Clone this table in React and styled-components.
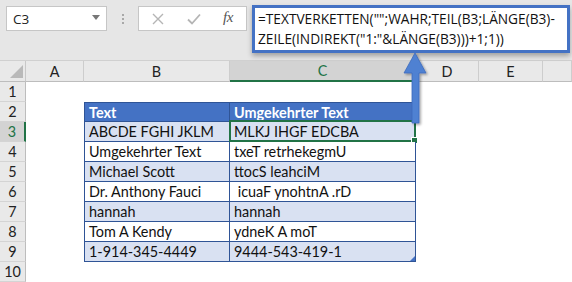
import React from 'react';
import styled, { createGlobalStyle, css } from 'styled-components';

const GlobalStyle = createGlobalStyle`
  html, body { margin: 0; padding: 0; background: #fff; }
  body { width: 572px; height: 282px; overflow: hidden; }
`;

const Window = styled.div`
  position: relative;
  width: 572px;
  height: 282px;
  overflow: hidden;
  background: #fff;
  font-family: "Lato", "Liberation Sans", sans-serif;
`;

/* ---------- formula bar ---------- */

const Toolbar = styled.div`
  box-sizing: border-box;
  height: 61px;
  display: flex;
  align-items: flex-start;
  padding: 6px 0 0 6px;
  background: #e6e6e6;
  border-bottom: 1px solid #d0d0d0;
`;

const NameBox = styled.div`
  box-sizing: border-box;
  width: 101px;
  height: 25px;
  display: flex;
  align-items: center;
  justify-content: space-between;
  padding: 0 6px 0 6px;
  background: #fff;
  border: 1px solid #c6c6c6;
  font-family: "Open Sans", "Noto Sans", sans-serif;
  font-size: 13.5px;
  color: #222;
`;

const Caret = styled.span`
  width: 0;
  height: 0;
  border-left: 4px solid transparent;
  border-right: 4px solid transparent;
  border-top: 5px solid #777;
  margin-top: -3px;
`;

const Grip = styled.div`
  margin: 8px 14px 0 15px;
  display: flex;
  flex-direction: column;
  gap: 2px;
  span {
    width: 2px;
    height: 2px;
    background: #a8a8a8;
  }
`;

const ButtonBox = styled.div`
  box-sizing: border-box;
  width: 109px;
  height: 25px;
  display: flex;
  align-items: center;
  padding: 0 0 0 13px;
  background: #fff;
  border: 1px solid #c6c6c6;
`;

const IconSlot = styled.span`
  display: flex;
  align-items: center;
  justify-content: center;
  width: ${(p) => p.$w}px;
  margin-left: ${(p) => p.$gap || 0}px;
`;

const Fx = styled.span`
  font-family: "Liberation Serif", "DejaVu Serif", serif;
  font-style: italic;
  font-size: 15px;
  color: #555;
  letter-spacing: -0.5px;
  margin-left: 22px;
  margin-top: -2px;
`;

const FormulaBox = styled.div`
  box-sizing: border-box;
  width: 318px;
  height: 48px;
  margin: -1px 0 0 5px;
  padding: 1px 0 0 3px;
  background: #fff;
  border: 3px solid #4472c4;
  box-shadow: 0 3px 5px rgba(0, 0, 0, 0.3);
  font-family: "Open Sans", "Noto Sans", sans-serif;
  font-size: 13.7px;
  line-height: 20px;
  color: #111;
  white-space: pre;
  position: relative;
  z-index: 2;
`;

/* ---------- sheet grid ---------- */

const Sheet = styled.div`
  display: grid;
  grid-template-columns: 26px 58px 146px 186px 63px 64px 1fr;
  grid-template-rows: 21px repeat(10, 20px);
  font-size: 14.4px;
`;

const Corner = styled.div`
  box-sizing: border-box;
  position: relative;
  background: #e9e9e9;
  border-right: 1px solid #c8c8c8;
  border-bottom: 1px solid #bdbdbd;
  &::after {
    content: '';
    position: absolute;
    right: 2px;
    bottom: 3px;
    width: 0;
    height: 0;
    border-left: 13px solid transparent;
    border-bottom: 13px solid #b9b9b9;
  }
`;

const ColHead = styled.div`
  box-sizing: border-box;
  display: flex;
  align-items: center;
  justify-content: center;
  background: #e9e9e9;
  border-right: 1px solid #cdcdcd;
  border-bottom: 1px solid #bdbdbd;
  color: #222;
  ${(p) =>
    p.$active &&
    css`
      background: #d3d3d3;
      color: #217346;
      border-bottom: 2px solid #217346;
    `}
`;

const RowHead = styled.div`
  box-sizing: border-box;
  display: flex;
  align-items: center;
  justify-content: center;
  background: #e9e9e9;
  border-right: 1px solid #bdbdbd;
  border-bottom: 1px solid #d4d4d4;
  color: #222;
  ${(p) =>
    p.$active &&
    css`
      background: #d3d3d3;
      color: #217346;
      border-right: 2px solid #217346;
    `}
`;

const Blank = styled.div`
  background: #fff;
`;

const Cell = styled.div`
  box-sizing: border-box;
  position: relative;
  display: flex;
  align-items: center;
  padding: 0 0 0 4px;
  white-space: pre;
  color: #111;
  background: ${(p) => (p.$head ? '#4472c4' : p.$band ? '#d9e1f2' : '#fff')};
  border-right: 1px solid #2f5496;
  border-bottom: 1px solid #2f5496;
  ${(p) => p.$first && css`border-left: 1px solid #2f5496;`}
  ${(p) => p.$top && css`border-top: 1px solid #2f5496;`}
  ${(p) =>
    p.$head &&
    css`
      color: #fff;
      font-weight: 700;
    `}
`;

/* active-cell outline and fill handle sit over the cell */
const Selection = styled.span`
  position: absolute;
  left: -1px;
  top: -2px;
  right: -1px;
  bottom: -1px;
  border: 2px solid #217346;
  pointer-events: none;
  &::after {
    content: '';
    position: absolute;
    right: -4px;
    bottom: -4px;
    width: 5px;
    height: 5px;
    background: #217346;
    border: 1px solid #fff;
  }
`;

/* table resize grip in the last cell */
const ResizeGrip = styled.span`
  position: absolute;
  right: 0;
  bottom: 0;
  width: 0;
  height: 0;
  border-left: 5px solid transparent;
  border-bottom: 5px solid #4472c4;
`;

const Arrow = styled.svg`
  position: absolute;
  left: 400px;
  top: 50px;
  z-index: 3;
  overflow: visible;
`;

const rows = [
  ['Text', 'Umgekehrter Text'],
  ['ABCDE FGHI JKLM', 'MLKJ IHGF EDCBA'],
  ['Umgekehrter Text', 'txeT retrhekegmU'],
  ['Michael Scott', 'ttocS leahciM'],
  ['Dr. Anthony Fauci', ' icuaF ynohtnA .rD'],
  ['hannah', 'hannah'],
  ['Tom A Kendy', 'ydneK A moT'],
  ['1-914-345-4449', '9444-543-419-1'],
];

const columns = ['A', 'B', 'C', 'D', 'E', ''];

function CrossIcon() {
  return (
    <svg width="12" height="12" viewBox="0 0 12 12">
      <path d="M1 1 L11 11 M11 1 L1 11" stroke="#b5b5b5" strokeWidth="1.4" fill="none" />
    </svg>
  );
}

function CheckIcon() {
  return (
    <svg width="14" height="12" viewBox="0 0 14 12">
      <path d="M1 6.5 L5 10.5 L13 1.5" stroke="#b5b5b5" strokeWidth="1.8" fill="none" />
    </svg>
  );
}

function SheetRow({ n }) {
  const dataIndex = n - 2;
  const data = dataIndex >= 0 && dataIndex < rows.length ? rows[dataIndex] : null;
  const band = dataIndex > 0 && dataIndex % 2 === 1;
  return (
    <>
      <RowHead $active={n === 3}>{n}</RowHead>
      <Blank />
      {data ? (
        <>
          <Cell $first $top={n === 2} $head={n === 2} $band={band}>
            {data[0]}
          </Cell>
          <Cell $top={n === 2} $head={n === 2} $band={band}>
            {data[1]}
            {n === 3 && <Selection />}
            {n === 9 && <ResizeGrip />}
          </Cell>
        </>
      ) : (
        <>
          <Blank />
          <Blank />
        </>
      )}
      <Blank />
      <Blank />
      <Blank />
    </>
  );
}

export default function App() {
  return (
    <Window>
      <GlobalStyle />
      <Toolbar>
        <NameBox>
          C3
          <Caret />
        </NameBox>
        <Grip>
          <span />
          <span />
          <span />
        </Grip>
        <ButtonBox>
          <IconSlot $w={12}>
            <CrossIcon />
          </IconSlot>
          <IconSlot $w={14} $gap={23}>
            <CheckIcon />
          </IconSlot>
          <Fx>fx</Fx>
        </ButtonBox>
        <FormulaBox>
          {'=TEXTVERKETTEN("";WAHR;TEIL(B3;LÄNGE(B3)-\nZEILE(INDIREKT("1:"&LÄNGE(B3)))+1;1))'}
        </FormulaBox>
      </Toolbar>
      <Sheet>
        <Corner />
        {columns.map((c) => (
          <ColHead key={c || 'F'} $active={c === 'C'}>
            {c}
          </ColHead>
        ))}
        {Array.from({ length: 10 }, (_, i) => (
          <SheetRow key={i} n={i + 1} />
        ))}
      </Sheet>
      <Arrow width="28" height="76" viewBox="0 0 28 76">
        <defs>
          <filter id="arrowShade" x="-50%" y="-20%" width="200%" height="140%">
            <feDropShadow dx="1.5" dy="1.5" stdDeviation="1.2" floodColor="#000" floodOpacity="0.35" />
          </filter>
        </defs>
        <path
          d="M15 3 L26 23 L19 23 L19 73 L12 73 L12 23 L4 23 Z"
          fill="#4f81d2"
          stroke="#3d6bbd"
          strokeWidth="0.8"
          filter="url(#arrowShade)"
        />
      </Arrow>
    </Window>
  );
}
